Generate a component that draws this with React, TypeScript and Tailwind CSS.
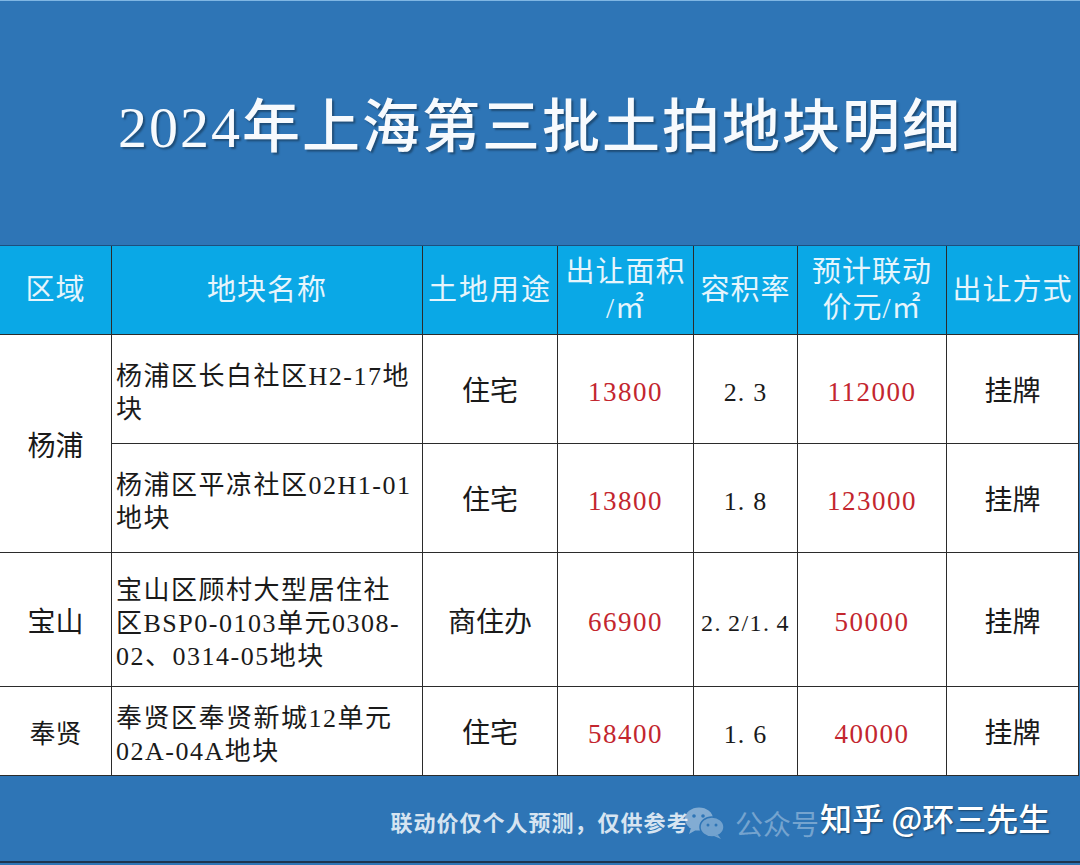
import React from "react";

const SERIF = "font-['Liberation_Serif','Noto_Sans_CJK_SC',serif]";

type Row = {
  name: string[];
  use: string;
  area: string;
  ratio: string;
  price: string;
};

const rows: Row[] = [
  { name: ["杨浦区长白社区H2-17地", "块"], use: "住宅", area: "13800", ratio: "2.3", price: "112000" },
  { name: ["杨浦区平凉社区02H1-01", "地块"], use: "住宅", area: "13800", ratio: "1.8", price: "123000" },
  { name: ["宝山区顾村大型居住社", "区BSP0-0103单元0308-", "02、0314-05地块"], use: "商住办", area: "66900", ratio: "2.2/1.4", price: "50000" },
  { name: ["奉贤区奉贤新城12单元", "02A-04A地块"], use: "住宅", area: "58400", ratio: "1.6", price: "40000" },
];

function HeadCell({ children, className = "" }: { children: React.ReactNode; className?: string }) {
  return (
    <div
      className={`bg-[#0aa8e6] text-[#e6f5fc] text-[29px] leading-[36px] tracking-[1px] flex flex-col items-center justify-center text-center ${className}`}
    >
      {children}
    </div>
  );
}

function Cell({ children, className = "" }: { children: React.ReactNode; className?: string }) {
  return <div className={`bg-white flex items-center justify-center text-center ${className}`}>{children}</div>;
}

function Region({ text, span, size }: { text: string; span?: boolean; size: string }) {
  return (
    <Cell className={`${span ? "row-span-2" : ""} text-[#1a1a1a] ${size} pt-[6px]`}>{text}</Cell>
  );
}

function Ratio({ value }: { value: string }) {
  const long = value.length > 3;
  return (
    <span className={long ? "text-[24px] tracking-[1.5px]" : "text-[26px] tracking-[1px]"}>
      {value.split("").map((c, i) =>
        c === "." ? (
          <span key={i} className={long ? "mr-[6px]" : "mr-[8px]"}>
            {c}
          </span>
        ) : (
          <span key={i}>{c}</span>
        )
      )}
    </span>
  );
}

function WeChat() {
  return (
    <svg width="44" height="34" viewBox="0 0 44 34" className="opacity-40">
      <ellipse cx="16" cy="13" rx="14" ry="11.5" fill="#ffffff" />
      <path d="M8 22 L6 28 L13 24 Z" fill="#ffffff" />
      <ellipse cx="29" cy="21" rx="12" ry="10" fill="#d9e6f2" stroke="#2e75b6" strokeWidth="1.5" />
      <path d="M35 29 L38 33 L31 30 Z" fill="#d9e6f2" />
      <circle cx="11" cy="10" r="1.8" fill="#2e75b6" />
      <circle cx="20" cy="10" r="1.8" fill="#2e75b6" />
      <circle cx="25" cy="19" r="1.5" fill="#2e75b6" />
      <circle cx="33" cy="19" r="1.5" fill="#2e75b6" />
    </svg>
  );
}

export default function App() {
  return (
    <div className={`w-[1080px] h-[865px] bg-[#2e75b6] overflow-hidden flex flex-col ${SERIF}`}>
      {/* Title */}
      <div className="h-[245px] flex items-center justify-center border-t border-[#7fb6e3]">
        <h1 className="text-[58px] tracking-[2px] text-[#f7fafd] font-medium leading-none mt-[10px] [text-shadow:2px_2px_2px_rgba(0,0,0,0.35)]">
          2024年上海第三批土拍地块明细
        </h1>
      </div>
      <div className="h-px bg-[#1d4f7e]" />

      {/* Table */}
      <div className="w-[1079px] grid grid-cols-[111px_310px_134px_135px_103px_148px_131px] grid-rows-[88px_108px_108px_133px_88px] gap-px bg-[#2b2b2b] border-r border-b border-[#2b2b2b]">
        <HeadCell>区域</HeadCell>
        <HeadCell>地块名称</HeadCell>
        <HeadCell className="tracking-[2px]">土地用途</HeadCell>
        <HeadCell>
          <span>出让面积</span>
          <span>/㎡</span>
        </HeadCell>
        <HeadCell>容积率</HeadCell>
        <HeadCell>
          <span>预计联动</span>
          <span>价元/㎡</span>
        </HeadCell>
        <HeadCell>出让方式</HeadCell>

        {rows.map((r, i) => (
          <React.Fragment key={i}>
            {i === 0 && <Region text="杨浦" span size="text-[28px]" />}
            {i === 2 && <Region text="宝山" size="text-[28px]" />}
            {i === 3 && <Region text="奉贤" size="text-[26px]" />}
            <div className="bg-white flex items-center pl-[4px] pt-[8px] text-[26px] leading-[33px] tracking-[1.5px] text-[#1a1a1a]">
              <div>
                {r.name.map((l, j) => (
                  <div key={j}>{l}</div>
                ))}
              </div>
            </div>
            <Cell className="text-[28px] text-[#1a1a1a] pt-[6px]">{r.use}</Cell>
            <Cell className="text-[27px] text-[#c3262e] tracking-[1.5px] pt-[6px]">{r.area}</Cell>
            <Cell className="text-[#1a1a1a] pt-[6px]">
              <Ratio value={r.ratio} />
            </Cell>
            <Cell className="text-[27px] text-[#c3262e] tracking-[1.5px] pt-[6px]">{r.price}</Cell>
            <Cell className="text-[28px] text-[#1a1a1a] pt-[6px]">挂牌</Cell>
          </React.Fragment>
        ))}
      </div>

      {/* Footer */}
      <div className="relative h-[87px] flex items-center justify-center border-b-2 border-[#1d3550]">
        <span className="text-[22px] tracking-[1px] text-[#d6e4f1] font-bold font-['Noto_Sans_CJK_SC',sans-serif] mt-[6px]">
          联动价仅个人预测，仅供参考
        </span>
        <div className="absolute left-[683px] top-[26px] flex items-center">
          <WeChat />
          <span className="ml-[8px] text-[28px] text-white/35 font-['Noto_Sans_CJK_SC',sans-serif]">公众号</span>
        </div>
        <span className="absolute left-[820px] top-[21px] text-[32px] leading-[40px] text-white font-medium font-['Noto_Sans_CJK_SC',sans-serif] [text-shadow:1px_1px_2px_rgba(0,0,0,0.45)]">
          知乎 @环三先生
        </span>
      </div>
    </div>
  );
}
